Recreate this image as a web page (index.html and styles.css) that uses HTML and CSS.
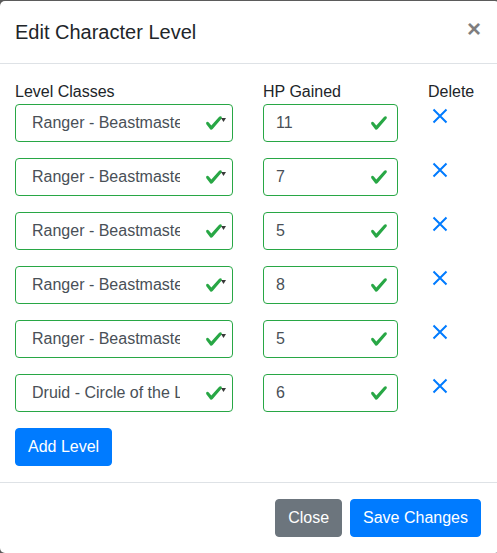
FILE: index.html
```html
<!DOCTYPE html>
<html lang="en">
<head>
<meta charset="utf-8">
<title>Edit Character Level</title>
<link rel="stylesheet" href="styles.css">
</head>
<body>
<div class="modal-content">
  <div class="modal-header">
    <h5 class="modal-title">Edit Character Level</h5>
    <button class="close" type="button" aria-label="Close">×</button>
  </div>
  <div class="modal-body">
    <div class="level-row head-row">
      <label class="lbl">Level Classes</label>
      <label class="lbl">HP Gained</label>
      <label class="lbl">Delete</label>
    </div>

    <div class="level-row">
      <div class="fake-select"><span class="sel-text">Ranger - Beastmaster</span><svg class="chk" viewBox="0 0 8 8"><path d="M2.3 6.73L.6 4.53c-.4-1.040.46-1.4 1.1-.8l1.1 1.4 3.4-3.8c.6-.63 1.6-.27 1.2.7l-4 4.6c-.43.5-.8.4-1.1.1z"/></svg><svg class="caret" viewBox="0 0 5 4"><path d="M0 0h5L2.5 4z"/></svg></div>
      <div class="fake-input"><span>11</span><svg class="chk" viewBox="0 0 8 8"><path d="M2.3 6.73L.6 4.53c-.4-1.04.46-1.4 1.1-.8l1.1 1.4 3.4-3.8c.6-.63 1.6-.27 1.2.7l-4 4.6c-.43.5-.8.4-1.1.1z"/></svg></div>
      <div class="del-cell"><svg class="del" viewBox="0 0 16 16"><path d="M1.5 1.5l13 13M14.5 1.5l-13 13"/></svg></div>
    </div>

    <div class="level-row">
      <div class="fake-select"><span class="sel-text">Ranger - Beastmaster</span><svg class="chk" viewBox="0 0 8 8"><path d="M2.3 6.73L.6 4.53c-.4-1.04.46-1.4 1.1-.8l1.1 1.4 3.4-3.8c.6-.63 1.6-.27 1.2.7l-4 4.6c-.43.5-.8.4-1.1.1z"/></svg><svg class="caret" viewBox="0 0 5 4"><path d="M0 0h5L2.5 4z"/></svg></div>
      <div class="fake-input"><span>7</span><svg class="chk" viewBox="0 0 8 8"><path d="M2.3 6.73L.6 4.53c-.4-1.04.46-1.4 1.1-.8l1.1 1.4 3.4-3.8c.6-.63 1.6-.27 1.2.7l-4 4.6c-.43.5-.8.4-1.1.1z"/></svg></div>
      <div class="del-cell"><svg class="del" viewBox="0 0 16 16"><path d="M1.5 1.5l13 13M14.5 1.5l-13 13"/></svg></div>
    </div>

    <div class="level-row">
      <div class="fake-select"><span class="sel-text">Ranger - Beastmaster</span><svg class="chk" viewBox="0 0 8 8"><path d="M2.3 6.73L.6 4.53c-.4-1.04.46-1.4 1.1-.8l1.1 1.4 3.4-3.8c.6-.63 1.6-.27 1.2.7l-4 4.6c-.43.5-.8.4-1.1.1z"/></svg><svg class="caret" viewBox="0 0 5 4"><path d="M0 0h5L2.5 4z"/></svg></div>
      <div class="fake-input"><span>5</span><svg class="chk" viewBox="0 0 8 8"><path d="M2.3 6.73L.6 4.53c-.4-1.04.46-1.4 1.1-.8l1.1 1.4 3.4-3.8c.6-.63 1.6-.27 1.2.7l-4 4.6c-.43.5-.8.4-1.1.1z"/></svg></div>
      <div class="del-cell"><svg class="del" viewBox="0 0 16 16"><path d="M1.5 1.5l13 13M14.5 1.5l-13 13"/></svg></div>
    </div>

    <div class="level-row">
      <div class="fake-select"><span class="sel-text">Ranger - Beastmaster</span><svg class="chk" viewBox="0 0 8 8"><path d="M2.3 6.73L.6 4.53c-.4-1.04.46-1.4 1.1-.8l1.1 1.4 3.4-3.8c.6-.63 1.6-.27 1.2.7l-4 4.6c-.43.5-.8.4-1.1.1z"/></svg><svg class="caret" viewBox="0 0 5 4"><path d="M0 0h5L2.5 4z"/></svg></div>
      <div class="fake-input"><span>8</span><svg class="chk" viewBox="0 0 8 8"><path d="M2.3 6.73L.6 4.53c-.4-1.04.46-1.4 1.1-.8l1.1 1.4 3.4-3.8c.6-.63 1.6-.27 1.2.7l-4 4.6c-.43.5-.8.4-1.1.1z"/></svg></div>
      <div class="del-cell"><svg class="del" viewBox="0 0 16 16"><path d="M1.5 1.5l13 13M14.5 1.5l-13 13"/></svg></div>
    </div>

    <div class="level-row">
      <div class="fake-select"><span class="sel-text">Ranger - Beastmaster</span><svg class="chk" viewBox="0 0 8 8"><path d="M2.3 6.73L.6 4.53c-.4-1.04.46-1.4 1.1-.8l1.1 1.4 3.4-3.8c.6-.63 1.6-.27 1.2.7l-4 4.6c-.43.5-.8.4-1.1.1z"/></svg><svg class="caret" viewBox="0 0 5 4"><path d="M0 0h5L2.5 4z"/></svg></div>
      <div class="fake-input"><span>5</span><svg class="chk" viewBox="0 0 8 8"><path d="M2.3 6.73L.6 4.53c-.4-1.04.46-1.4 1.1-.8l1.1 1.4 3.4-3.8c.6-.63 1.6-.27 1.2.7l-4 4.6c-.43.5-.8.4-1.1.1z"/></svg></div>
      <div class="del-cell"><svg class="del" viewBox="0 0 16 16"><path d="M1.5 1.5l13 13M14.5 1.5l-13 13"/></svg></div>
    </div>

    <div class="level-row">
      <div class="fake-select"><span class="sel-text">Druid - Circle of the Land</span><svg class="chk" viewBox="0 0 8 8"><path d="M2.3 6.73L.6 4.53c-.4-1.04.46-1.4 1.1-.8l1.1 1.4 3.4-3.8c.6-.63 1.6-.27 1.2.7l-4 4.6c-.43.5-.8.4-1.1.1z"/></svg><svg class="caret" viewBox="0 0 5 4"><path d="M0 0h5L2.5 4z"/></svg></div>
      <div class="fake-input"><span>6</span><svg class="chk" viewBox="0 0 8 8"><path d="M2.3 6.73L.6 4.53c-.4-1.04.46-1.4 1.1-.8l1.1 1.4 3.4-3.8c.6-.63 1.6-.27 1.2.7l-4 4.6c-.43.5-.8.4-1.1.1z"/></svg></div>
      <div class="del-cell"><svg class="del" viewBox="0 0 16 16"><path d="M1.5 1.5l13 13M14.5 1.5l-13 13"/></svg></div>
    </div>

    <button class="btn btn-primary" type="button">Add Level</button>
  </div>
  <div class="modal-footer">
    <button class="btn btn-secondary" type="button">Close</button>
    <button class="btn btn-primary" type="button">Save Changes</button>
  </div>
</div>
</body>
</html>
```

FILE: styles.css
```css
html, body {
  margin: 0;
  padding: 0;
  height: 100%;
  overflow: hidden;
  background: #5b5b5b;
  font-family: "Liberation Sans", Arial, sans-serif;
  color: #212529;
  font-size: 16px;
  line-height: 1.5;
}

.modal-content {
  width: 500px;
  margin: 1px 0 0 0;
  background: #fff;
  border-radius: 5px;
  display: flex;
  flex-direction: column;
}

.modal-header {
  display: flex;
  align-items: flex-start;
  padding: 16px 16px 16px 15px;
  border-bottom: 1px solid #dee2e6;
}

.modal-title {
  margin: 0;
  font-size: 20px;
  font-weight: 500;
  line-height: 1.5;
}

.close {
  margin: -16px -16px -16px auto;
  padding: 16px 19px 16px 16px;
  background: transparent;
  border: 0;
  font-family: "Liberation Sans", Arial, sans-serif;
  font-size: 24px;
  font-weight: 700;
  line-height: 1;
  color: #000;
  opacity: .5;
  text-shadow: 0 1px 0 #fff;
}

.modal-body {
  padding: 16px 16px 16px 15px;
}

.level-row {
  display: grid;
  grid-template-columns: 218px 135px 1fr;
  column-gap: 30px;
  margin-bottom: 16px;
}

.level-row.head-row {
  margin-bottom: 0;
}

.lbl {
  display: block;
  line-height: 24px;
}

.fake-select,
.fake-input {
  position: relative;
  box-sizing: border-box;
  height: 38px;
  border: 1px solid #28a745;
  border-radius: 4px;
  color: #495057;
  line-height: 24px;
  padding: 6px 12px;
  background: #fff;
}

.fake-select {
  padding: 6px 52px 6px 16px;
}

.sel-text {
  display: block;
  white-space: nowrap;
  overflow: hidden;
}

.chk {
  position: absolute;
  right: 9px;
  top: 9px;
  width: 18px;
  height: 18px;
  fill: #28a745;
}

.caret {
  position: absolute;
  right: 6px;
  top: 13px;
  width: 5px;
  height: 4px;
  fill: #3a3a3a;
}

.del-cell {
  padding: 4px 0 0 4px;
}

.del {
  display: block;
  width: 16px;
  height: 16px;
  stroke: #007bff;
  stroke-width: 2;
  fill: none;
}

.btn {
  display: inline-block;
  box-sizing: border-box;
  height: 38px;
  padding: 6px 12px;
  font-family: "Liberation Sans", Arial, sans-serif;
  font-size: 16px;
  line-height: 24px;
  border: 1px solid transparent;
  border-radius: 4px;
  color: #fff;
}

.btn-primary {
  background: #007bff;
  border-color: #007bff;
}

.btn-secondary {
  background: #6c757d;
  border-color: #6c757d;
}

.modal-footer {
  display: flex;
  justify-content: flex-end;
  align-items: center;
  gap: 8px;
  padding: 16px 19px 16px 16px;
  border-top: 1px solid #dee2e6;
}
```
